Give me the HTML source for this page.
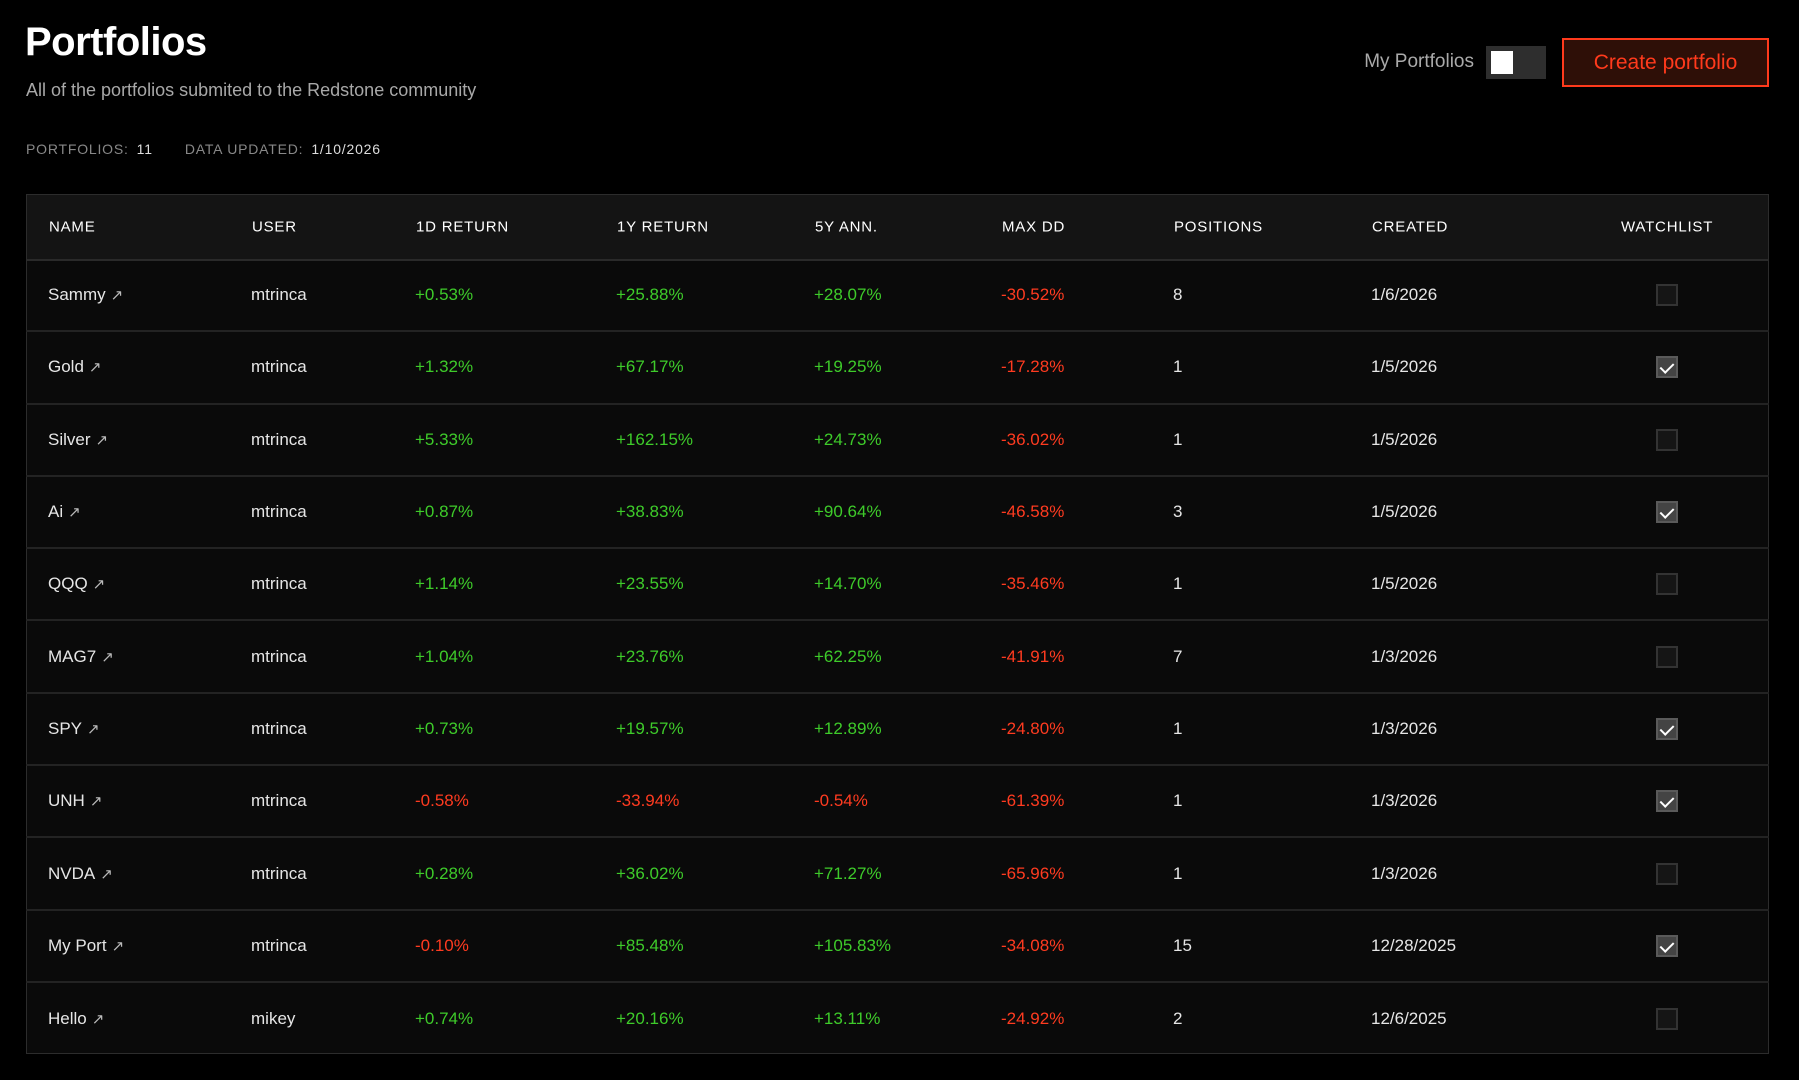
<!DOCTYPE html>
<html><head><meta charset="utf-8"><style>
*{margin:0;padding:0;box-sizing:border-box}
body{width:1799px;height:1080px;background:#000;color:#e6e6e6;font-family:"Liberation Sans",sans-serif;position:relative;overflow:hidden}
.abs{position:absolute;white-space:nowrap}
h1{position:absolute;left:25px;top:20px;font-size:40px;font-weight:700;color:#fff;letter-spacing:-0.5px}
.sub{left:26px;top:80px;font-size:18px;color:#a8a8a8}
.stats{left:26px;top:141px;font-size:14px;letter-spacing:0.8px;color:#888}
.stats b{font-weight:400;color:#ddd;margin-left:8px}
.toggle{left:1486px;top:46px;width:60px;height:33px;background:#2e2e2e}
.toggle::after{content:"";position:absolute;left:5px;top:5px;width:22px;height:23px;background:#fff}
.btn{left:1562px;top:38px;width:207px;height:49px;border:2px solid #ff3a1c;background:#2e0f07;color:#ff3a1c;font-size:21px;text-align:center;line-height:45px}
.tbl{left:26px;top:194px;width:1743px;height:860px;border:1px solid #2c2c2c;background:#0a0a0a}
.hdr{position:absolute;left:0;top:0;width:100%;height:66px;background:#141414;border-bottom:2px solid #2a2a2a}
.row{position:absolute;left:0;width:100%;height:72.3px;border-bottom:2px solid #232323}
.c{position:absolute;top:50%;transform:translateY(-50%);font-size:17px;white-space:nowrap}
.hdr .c{font-size:15px;letter-spacing:0.8px;color:#fff}
.g{color:#3ecb2a}.r{color:#ff3b20}
.cb{position:absolute;left:1630px;top:50%;margin-top:-11px;width:22px;height:22px;border:2px solid #333;background:#151515}
.cb.on{background:#444;border-color:#5a5a5a}
.cb.on::after{content:"";position:absolute;left:5px;top:2px;width:6px;height:11px;border:solid #fff;border-width:0 2px 2px 0;transform:rotate(45deg)}
.ar{color:#bbb;font-size:15px;margin-left:5px;font-weight:300}
</style></head><body>
<h1>Portfolios</h1>
<div class="abs sub">All of the portfolios submited to the Redstone community</div>
<div class="abs stats">PORTFOLIOS:<b>11</b><span style="margin-left:32px">DATA UPDATED:</span><b>1/10/2026</b></div>
<div class="abs" style="right:325px;top:51px;font-size:19px;color:#aaa">My Portfolios</div>
<div class="abs toggle"></div>
<div class="abs btn">Create portfolio</div>
<div class="abs tbl">
<div class="hdr">
<span class="c" style="left:22px">NAME</span><span class="c" style="left:225px">USER</span><span class="c" style="left:389px">1D RETURN</span><span class="c" style="left:590px">1Y RETURN</span><span class="c" style="left:788px">5Y ANN.</span><span class="c" style="left:975px">MAX DD</span><span class="c" style="left:1147px">POSITIONS</span><span class="c" style="left:1345px">CREATED</span><span class="c" style="left:1594px">WATCHLIST</span>
</div>
</div>
<div class="abs" style="left:26px;top:260px;width:1743px">
<div class="row" style="top:0"><span class="c" style="left:22px">Sammy<span class="ar">↗</span></span><span class="c" style="left:225px">mtrinca</span><span class="c g" style="left:389px">+0.53%</span><span class="c g" style="left:590px">+25.88%</span><span class="c g" style="left:788px">+28.07%</span><span class="c r" style="left:975px">-30.52%</span><span class="c" style="left:1147px">8</span><span class="c" style="left:1345px">1/6/2026</span><span class="cb"></span></div>
<div class="row" style="top:72.3px"><span class="c" style="left:22px">Gold<span class="ar">↗</span></span><span class="c" style="left:225px">mtrinca</span><span class="c g" style="left:389px">+1.32%</span><span class="c g" style="left:590px">+67.17%</span><span class="c g" style="left:788px">+19.25%</span><span class="c r" style="left:975px">-17.28%</span><span class="c" style="left:1147px">1</span><span class="c" style="left:1345px">1/5/2026</span><span class="cb on"></span></div>
<div class="row" style="top:144.6px"><span class="c" style="left:22px">Silver<span class="ar">↗</span></span><span class="c" style="left:225px">mtrinca</span><span class="c g" style="left:389px">+5.33%</span><span class="c g" style="left:590px">+162.15%</span><span class="c g" style="left:788px">+24.73%</span><span class="c r" style="left:975px">-36.02%</span><span class="c" style="left:1147px">1</span><span class="c" style="left:1345px">1/5/2026</span><span class="cb"></span></div>
<div class="row" style="top:216.9px"><span class="c" style="left:22px">Ai<span class="ar">↗</span></span><span class="c" style="left:225px">mtrinca</span><span class="c g" style="left:389px">+0.87%</span><span class="c g" style="left:590px">+38.83%</span><span class="c g" style="left:788px">+90.64%</span><span class="c r" style="left:975px">-46.58%</span><span class="c" style="left:1147px">3</span><span class="c" style="left:1345px">1/5/2026</span><span class="cb on"></span></div>
<div class="row" style="top:289.2px"><span class="c" style="left:22px">QQQ<span class="ar">↗</span></span><span class="c" style="left:225px">mtrinca</span><span class="c g" style="left:389px">+1.14%</span><span class="c g" style="left:590px">+23.55%</span><span class="c g" style="left:788px">+14.70%</span><span class="c r" style="left:975px">-35.46%</span><span class="c" style="left:1147px">1</span><span class="c" style="left:1345px">1/5/2026</span><span class="cb"></span></div>
<div class="row" style="top:361.5px"><span class="c" style="left:22px">MAG7<span class="ar">↗</span></span><span class="c" style="left:225px">mtrinca</span><span class="c g" style="left:389px">+1.04%</span><span class="c g" style="left:590px">+23.76%</span><span class="c g" style="left:788px">+62.25%</span><span class="c r" style="left:975px">-41.91%</span><span class="c" style="left:1147px">7</span><span class="c" style="left:1345px">1/3/2026</span><span class="cb"></span></div>
<div class="row" style="top:433.8px"><span class="c" style="left:22px">SPY<span class="ar">↗</span></span><span class="c" style="left:225px">mtrinca</span><span class="c g" style="left:389px">+0.73%</span><span class="c g" style="left:590px">+19.57%</span><span class="c g" style="left:788px">+12.89%</span><span class="c r" style="left:975px">-24.80%</span><span class="c" style="left:1147px">1</span><span class="c" style="left:1345px">1/3/2026</span><span class="cb on"></span></div>
<div class="row" style="top:506.1px"><span class="c" style="left:22px">UNH<span class="ar">↗</span></span><span class="c" style="left:225px">mtrinca</span><span class="c r" style="left:389px">-0.58%</span><span class="c r" style="left:590px">-33.94%</span><span class="c r" style="left:788px">-0.54%</span><span class="c r" style="left:975px">-61.39%</span><span class="c" style="left:1147px">1</span><span class="c" style="left:1345px">1/3/2026</span><span class="cb on"></span></div>
<div class="row" style="top:578.4px"><span class="c" style="left:22px">NVDA<span class="ar">↗</span></span><span class="c" style="left:225px">mtrinca</span><span class="c g" style="left:389px">+0.28%</span><span class="c g" style="left:590px">+36.02%</span><span class="c g" style="left:788px">+71.27%</span><span class="c r" style="left:975px">-65.96%</span><span class="c" style="left:1147px">1</span><span class="c" style="left:1345px">1/3/2026</span><span class="cb"></span></div>
<div class="row" style="top:650.7px"><span class="c" style="left:22px">My Port<span class="ar">↗</span></span><span class="c" style="left:225px">mtrinca</span><span class="c r" style="left:389px">-0.10%</span><span class="c g" style="left:590px">+85.48%</span><span class="c g" style="left:788px">+105.83%</span><span class="c r" style="left:975px">-34.08%</span><span class="c" style="left:1147px">15</span><span class="c" style="left:1345px">12/28/2025</span><span class="cb on"></span></div>
<div class="row" style="top:723px;border-bottom:none"><span class="c" style="left:22px">Hello<span class="ar">↗</span></span><span class="c" style="left:225px">mikey</span><span class="c g" style="left:389px">+0.74%</span><span class="c g" style="left:590px">+20.16%</span><span class="c g" style="left:788px">+13.11%</span><span class="c r" style="left:975px">-24.92%</span><span class="c" style="left:1147px">2</span><span class="c" style="left:1345px">12/6/2025</span><span class="cb"></span></div>
</div>
</body></html>
